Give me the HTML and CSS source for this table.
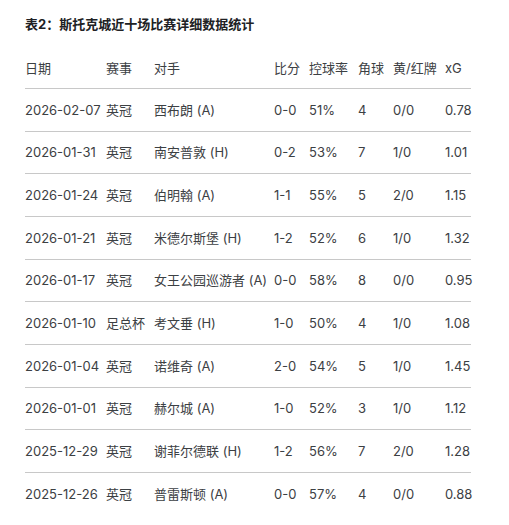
FILE: index.html
```html
<!DOCTYPE html>
<html lang="zh">
<head>
<meta charset="utf-8">
<link rel="stylesheet" href="styles.css">
</head>
<body>
<div class="wrap">
  <h3 class="title">表2：斯托克城近十场比赛详细数据统计</h3>
  <table class="stats">
    <colgroup>
      <col class="c-date"><col class="c-comp"><col class="c-opp"><col class="c-score"><col class="c-pos"><col class="c-corner"><col class="c-card"><col class="c-xg">
    </colgroup>
    <thead>
      <tr><th>日期</th><th>赛事</th><th>对手</th><th>比分</th><th>控球率</th><th>角球</th><th>黄/红牌</th><th>xG</th></tr>
    </thead>
    <tbody>
      <tr><td>2026-02-07</td><td>英冠</td><td>西布朗 (A)</td><td>0-0</td><td>51%</td><td>4</td><td>0/0</td><td>0.78</td></tr>
      <tr><td>2026-01-31</td><td>英冠</td><td>南安普敦 (H)</td><td>0-2</td><td>53%</td><td>7</td><td>1/0</td><td>1.01</td></tr>
      <tr><td>2026-01-24</td><td>英冠</td><td>伯明翰 (A)</td><td>1-1</td><td>55%</td><td>5</td><td>2/0</td><td>1.15</td></tr>
      <tr><td>2026-01-21</td><td>英冠</td><td>米德尔斯堡 (H)</td><td>1-2</td><td>52%</td><td>6</td><td>1/0</td><td>1.32</td></tr>
      <tr><td>2026-01-17</td><td>英冠</td><td>女王公园巡游者 (A)</td><td>0-0</td><td>58%</td><td>8</td><td>0/0</td><td>0.95</td></tr>
      <tr><td>2026-01-10</td><td>足总杯</td><td>考文垂 (H)</td><td>1-0</td><td>50%</td><td>4</td><td>1/0</td><td>1.08</td></tr>
      <tr><td>2026-01-04</td><td>英冠</td><td>诺维奇 (A)</td><td>2-0</td><td>54%</td><td>5</td><td>1/0</td><td>1.45</td></tr>
      <tr><td>2026-01-01</td><td>英冠</td><td>赫尔城 (A)</td><td>1-0</td><td>52%</td><td>3</td><td>1/0</td><td>1.12</td></tr>
      <tr><td>2025-12-29</td><td>英冠</td><td>谢菲尔德联 (H)</td><td>1-2</td><td>56%</td><td>7</td><td>2/0</td><td>1.28</td></tr>
      <tr class="last"><td>2025-12-26</td><td>英冠</td><td>普雷斯顿 (A)</td><td>0-0</td><td>57%</td><td>4</td><td>0/0</td><td>0.88</td></tr>
    </tbody>
  </table>
</div>
</body>
</html>
```

FILE: styles.css
```css
html, body {
  margin: 0;
  padding: 0;
  background: #ffffff;
}
body {
  font-family: Inter, Roboto, "Noto Sans CJK SC", sans-serif;
  color: #3c4043;
  font-size: 13px;
}
.wrap {
  padding: 17px 25px 0 25px;
}
.title {
  margin: 0 0 15px 0;
  font-size: 13px;
  line-height: 15px;
  font-weight: 700;
  color: #202124;
}
.stats {
  border-collapse: collapse;
  table-layout: fixed;
  width: 446px;
}
.c-date { width: 81px; }
.c-comp { width: 48px; }
.c-opp { width: 120px; }
.c-score { width: 35px; }
.c-pos { width: 49px; }
.c-corner { width: 35px; }
.c-card { width: 52px; }
.c-xg { width: 26px; }
.stats th,
.stats td {
  padding: 0;
  text-align: left;
  font-weight: 400;
  line-height: 20px;
  white-space: nowrap;
  vertical-align: middle;
  border-bottom: 1px solid #c8c8c8;
}
.stats th {
  height: 41px;
}
.stats td {
  height: 41.67px;
}
.stats tr.last td {
  border-bottom: none;
}
```
